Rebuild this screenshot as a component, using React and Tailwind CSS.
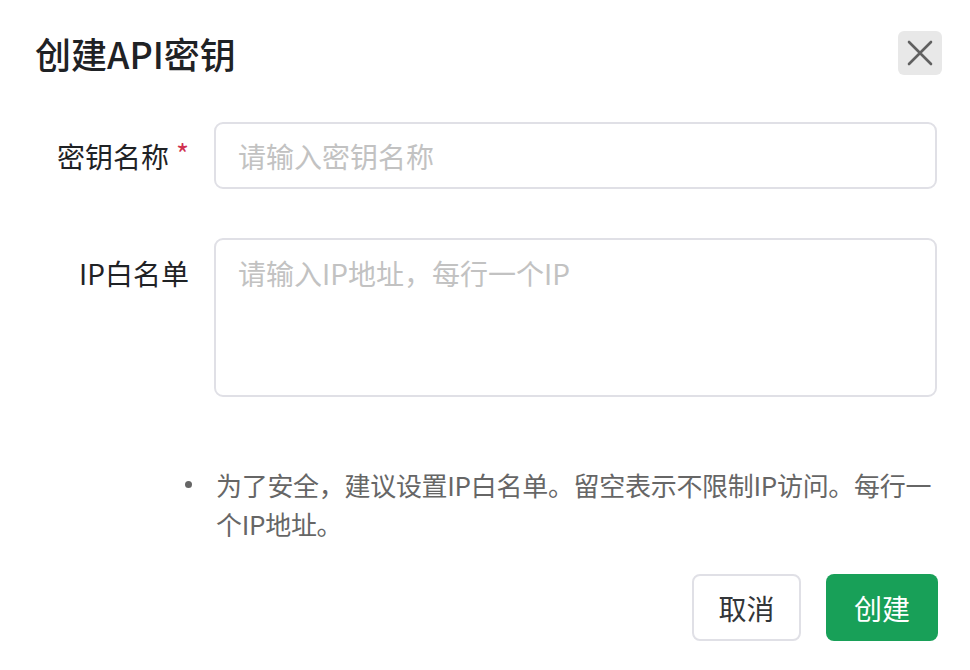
import { useState } from 'react';

export default function App() {
  const [name, setName] = useState('');
  const [ips, setIps] = useState('');

  return (
    <div
      className="w-[970px] h-[670px] bg-white text-[#1f2225] overflow-hidden"
      style={{ fontFamily: '"Noto Sans CJK SC", "Noto Sans", sans-serif' }}
    >
      <div className="flex items-center justify-between h-[44px] mt-[31px] pl-[35px] pr-[28px]">
        <h2 className="text-[36px] font-medium leading-none">创建API密钥</h2>
        <button className="w-[44px] h-[44px] rounded-[6px] bg-[#e8e8e8] flex items-center justify-center">
          <svg width="26" height="26" viewBox="0 0 26 26" fill="none" stroke="#606060" strokeWidth="2.6" strokeLinecap="round">
            <path d="M2 2 L24 24 M24 2 L2 24" />
          </svg>
        </button>
      </div>

      <div className="flex mt-[47px] pr-[33px]">
        <div className="w-[214px] pr-[25px] h-[67px] flex items-center justify-end text-[28px]">
          <span>密钥名称</span>
          <span className="ml-[7px] text-[#d03050] -mt-[6px]">*</span>
        </div>
        <input
          value={name}
          onChange={(e) => setName(e.target.value)}
          placeholder="请输入密钥名称"
          className="flex-1 h-[67px] border-2 border-[#e0e0e6] rounded-[9px] px-[22px] text-[28px] outline-none placeholder:text-[#c2c2c2]"
        />
      </div>

      <div className="flex mt-[49px] pr-[33px]">
        <div className="w-[214px] pr-[25px] pt-[13px] text-right text-[28px] leading-[45px]">IP白名单</div>
        <textarea
          value={ips}
          onChange={(e) => setIps(e.target.value)}
          placeholder="请输入IP地址，每行一个IP"
          className="flex-1 h-[159px] border-2 border-[#e0e0e6] rounded-[9px] px-[22px] pt-[11px] text-[28px] leading-[45px] outline-none resize-none placeholder:text-[#c2c2c2]"
        />
      </div>

      <div className="flex mt-[68px] pl-[185px] pr-[20px] text-[26px] leading-[39px] text-[#666]">
        <span className="w-[7px] h-[7px] rounded-full bg-[#666] mt-[16px] shrink-0" />
        <p className="ml-[24px] whitespace-nowrap tracking-[-0.3px]">
          为了安全，建议设置IP白名单。留空表示不限制IP访问。每行一
          <br />
          个IP地址。
        </p>
      </div>

      <div className="flex justify-end gap-[25px] mt-[31px] pr-[32px]">
        <button className="w-[109px] h-[67px] border-2 border-[#e0e0e6] rounded-[8px] text-[28px] text-[#333639]">取消</button>
        <button className="w-[112px] h-[67px] rounded-[8px] bg-[#18a058] text-[28px] text-white">创建</button>
      </div>
    </div>
  );
}
